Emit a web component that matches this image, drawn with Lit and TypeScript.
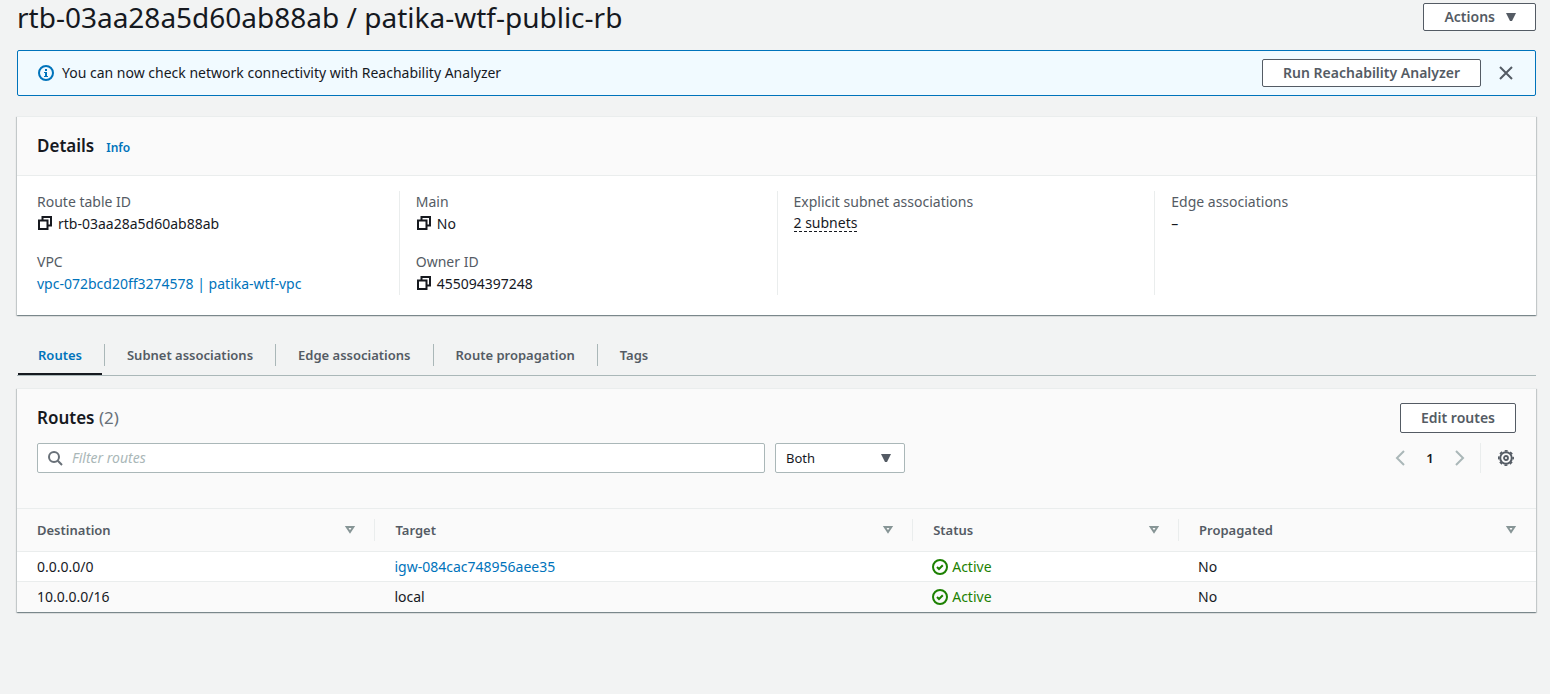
import { LitElement, html, css, svg } from "lit";
import { customElement, state } from "lit/decorators.js";

interface Route {
  destination: string;
  target: string;
  link: boolean;
  status: string;
  propagated: string;
}

const ROUTES: Route[] = [
  { destination: "0.0.0.0/0", target: "igw-084cac748956aee35", link: true, status: "Active", propagated: "No" },
  { destination: "10.0.0.0/16", target: "local", link: false, status: "Active", propagated: "No" },
];

const TABS = ["Routes", "Subnet associations", "Edge associations", "Route propagation", "Tags"];
const COLUMNS = ["Destination", "Target", "Status", "Propagated"];

const icon = (body: unknown, name = "") =>
  html`<svg class="icon ${name}" viewBox="0 0 16 16" width="16" height="16" aria-hidden="true">${body}</svg>`;

const copyIcon = () =>
  icon(svg`<path d="M2 5.5h8.5V14H2z" /><path d="M5.5 5.5V2H14v8.5h-3.5" />`, "copy");
const infoIcon = () =>
  icon(
    svg`<circle cx="8" cy="8" r="7" /><path class="solid" d="M7 4h2v2H7zM6 7h3v4h1v1H6v-1h1V8H6z" />`,
    "info",
  );
const closeIcon = () => icon(svg`<path d="M2 2l12 12M14 2L2 14" />`, "grey");
const caret = () => icon(svg`<path class="solid" d="M3 4h10l-4 8H7z" />`, "grey");
const sortIcon = () => icon(svg`<path d="M4.7 5h6.6L8 10z" />`, "sort");
const searchIcon = () => icon(svg`<circle cx="7" cy="7" r="5" /><path d="M10.8 10.8L15 15" />`, "search-icon");
const checkIcon = () => icon(svg`<circle cx="8" cy="8" r="7" /><path d="M5 8l2 2 3.8-3.8" />`, "green");
const prevIcon = () => icon(svg`<path d="M12 1L5 8l7 7" />`, "pale");
const nextIcon = () => icon(svg`<path d="M4 1l7 7-7 7" />`, "pale");
const gearIcon = () =>
  icon(
    svg`<circle cx="8" cy="8" r="5.8" /><circle cx="8" cy="8" r="7.2" stroke-width="1.6" stroke-dasharray="3 2.65" stroke-dashoffset="1.5" /><circle cx="8" cy="8" r="2" stroke-width="1.8" />`,
    "grey",
  );

@customElement("app-root")
export class AppRoot extends LitElement {
  @state() private tab = 0;
  @state() private alertOpen = true;
  @state() private query = "";

  static styles = css`
    :host {
      display: block;
      box-sizing: border-box;
      min-height: 100vh;
      padding: 3px 14px 20px 17px;
      background: #f2f3f3;
      color: #16191f;
      font: 14px/22px "Noto Sans", "Open Sans", sans-serif;
    }
    * { box-sizing: border-box; }
    h1, h2, dl, dd, dt, ul, p { margin: 0; padding: 0; }
    button, input, select { font: inherit; color: inherit; }
    a { color: #0073bb; text-decoration: none; }
    .icon { display: block; flex: none; fill: none; stroke: currentColor; stroke-width: 2; }
    .solid { fill: currentColor; stroke: none; }
    .copy { margin-bottom: 2px; color: #16191f; }
    .info { color: #0073bb; }
    .grey { color: #545b64; }
    .search-icon { color: #687078; }
    .sort { color: #879596; }
    .pale { color: #aab7b8; }
    .green { color: #1d8102; }

    .top { display: flex; justify-content: space-between; align-items: center; gap: 20px; }
    h1 { font-size: 28px; line-height: 28px; font-weight: 400; }
    .btn {
      display: flex;
      align-items: center;
      gap: 8px;
      height: 28px;
      padding: 0 20px;
      border: 1px solid #545b64;
      border-radius: 2px;
      background: #fff;
      color: #545b64;
      font-weight: 600;
      white-space: nowrap;
      cursor: pointer;
    }
    .btn.menu { padding-right: 16px; }
    .btn.tall { height: 30px; }
    .plain { display: flex; justify-content: center; padding: 0; border: 0; background: none; cursor: pointer; }

    .alert {
      display: flex;
      align-items: center;
      gap: 8px;
      margin-top: 19px;
      padding: 8px 21px 8px 20px;
      border: 1px solid #0073bb;
      border-radius: 2px;
      background: #f1faff;
    }
    .alert p { flex: 1; }
    .alert .btn { margin-right: 9px; }

    .card {
      border-top: 1px solid #eaeded;
      background: #fff;
      box-shadow: 0 1px 1px 0 rgba(0, 28, 36, 0.3), 1px 1px 1px 0 rgba(0, 28, 36, 0.15),
        -1px 1px 1px 0 rgba(0, 28, 36, 0.15);
    }
    .details { margin-top: 20px; }
    .details header {
      display: flex;
      align-items: baseline;
      gap: 12px;
      padding: 18px 20px;
      border-bottom: 1px solid #eaeded;
      background: #fafafa;
    }
    h2 { font-size: 17px; line-height: 22px; font-weight: 600; }
    h2 span { color: #687078; font-weight: 400; }
    .info-link { font-size: 12px; line-height: 16px; font-weight: 600; }
    .facts { display: grid; grid-template-columns: repeat(4, 1fr); padding: 15px 4px 20px; }
    .facts dl { padding: 0 16px; }
    .facts dl + dl { border-left: 1px solid #eaeded; }
    dt { color: #545b64; }
    dd { display: flex; align-items: center; gap: 5px; }
    dd + dt { margin-top: 16px; }
    .dashed {
      padding: 2px 0 0;
      border: 0;
      border-bottom: 1px dashed #16191f;
      background: none;
      line-height: 16px;
      cursor: pointer;
    }

    .tabs {
      display: flex;
      margin-top: 29px;
      padding-left: 1px;
      border-bottom: 1px solid #aab7b8;
    }
    .tab {
      padding: 0 20px 7px;
      border: 0;
      border-bottom: 2px solid transparent;
      background: none;
      color: #545b64;
      font-size: 13px;
      font-weight: 600;
      cursor: pointer;
    }
    .tab.on { border-bottom-color: #16191f; color: #0073bb; }
    .rule { width: 1px; height: 22px; margin: 0 2px; background: #aab7b8; }

    .routes { margin-top: 12px; }
    .routes header { padding: 14px 20px 35px; background: #fafafa; }
    .line { display: flex; align-items: center; justify-content: space-between; }
    .tools { display: flex; align-items: center; gap: 10px; margin-top: 10px; }
    .search {
      display: flex;
      align-items: center;
      flex: 0 1 728px;
      gap: 9px;
      height: 30px;
      padding: 0 9px;
      border: 1px solid #aab7b8;
      border-radius: 2px;
      background: #fff;
    }
    .search input { flex: 1; min-width: 0; padding: 0; border: 0; outline: 0; background: none; }
    .search input::placeholder { color: #aab7b8; font-style: italic; opacity: 1; }
    .pick { display: grid; align-items: center; width: 130px; }
    .pick > * { grid-area: 1 / 1; }
    .pick .icon { justify-self: end; margin-right: 11px; pointer-events: none; }
    .pick select {
      appearance: none;
      width: 100%;
      height: 30px;
      padding: 0 30px 0 10px;
      border: 1px solid #aab7b8;
      border-radius: 2px;
      background: #fff;
      font-size: 13px;
    }
    .pager { display: flex; align-items: center; margin-left: auto; }
    .pager .plain { width: 20px; }
    .page { width: 40px; border: 0; padding: 0; background: none; text-align: center; font-size: 13px; font-weight: 600; }
    .prefs { display: flex; align-items: center; height: 30px; padding-left: 15px; border-left: 1px solid #eaeded; }
    .prefs .plain { width: 20px; }

    table { width: 100%; table-layout: fixed; border-collapse: separate; border-spacing: 0; }
    .c1 { width: 23.6%; }
    .c2 { width: 35.4%; }
    .c3 { width: 17.5%; }
    th {
      padding: 10px 0;
      border-top: 1px solid #eaeded;
      border-bottom: 1px solid #eaeded;
      background: #fafafa;
      color: #545b64;
      font-size: 13px;
      font-weight: 600;
      text-align: left;
    }
    .head { display: flex; align-items: center; justify-content: space-between; padding: 0 16px 0 20px; border-right: 1px solid #eaeded; }
    th:last-child .head { border-right-color: transparent; }
    td { height: 30px; padding: 0 19px; border-bottom: 1px solid #eaeded; }
    td:first-child { padding-left: 20px; }
    tr:last-child td { border-bottom: 0; background: #fafafa; }
    .status { display: flex; align-items: center; gap: 4px; color: #1d8102; }
  `;

  render() {
    const rows = ROUTES.filter((r) => (r.destination + r.target).includes(this.query));
    return html`
      <main>
        <div class="top">
          <h1>rtb-03aa28a5d60ab88ab / patika-wtf-public-rb</h1>
          <button class="btn menu">Actions ${caret()}</button>
        </div>

        ${this.alertOpen
          ? html`<div class="alert" role="status">
              ${infoIcon()}
              <p>You can now check network connectivity with Reachability Analyzer</p>
              <button class="btn">Run Reachability Analyzer</button>
              <button class="plain" aria-label="Dismiss" @click=${() => (this.alertOpen = false)}>${closeIcon()}</button>
            </div>`
          : ""}

        <section class="card details">
          <header>
            <h2>Details</h2>
            <a class="info-link" href="#info">Info</a>
          </header>
          <div class="facts">
            <dl>
              <dt>Route table ID</dt>
              <dd>${copyIcon()}rtb-03aa28a5d60ab88ab</dd>
              <dt>VPC</dt>
              <dd><a href="#vpc">vpc-072bcd20ff3274578 | patika-wtf-vpc</a></dd>
            </dl>
            <dl>
              <dt>Main</dt>
              <dd>${copyIcon()}No</dd>
              <dt>Owner ID</dt>
              <dd>${copyIcon()}455094397248</dd>
            </dl>
            <dl>
              <dt>Explicit subnet associations</dt>
              <dd><button class="dashed">2 subnets</button></dd>
            </dl>
            <dl>
              <dt>Edge associations</dt>
              <dd>–</dd>
            </dl>
          </div>
        </section>

        <div class="tabs" role="tablist">
          ${TABS.map(
            (t, i) => html`${i ? html`<span class="rule"></span>` : ""}<button
                class="tab ${i === this.tab ? "on" : ""}"
                role="tab"
                aria-selected=${i === this.tab ? "true" : "false"}
                @click=${() => (this.tab = i)}
              >${t}</button>`,
          )}
        </div>

        <section class="card routes">
          <header>
            <div class="line">
              <h2>Routes <span>(${ROUTES.length})</span></h2>
              <button class="btn tall">Edit routes</button>
            </div>
            <div class="tools">
              <label class="search">
                ${searchIcon()}
                <input
                  type="text"
                  aria-label="Filter routes"
                  placeholder="Filter routes"
                  @input=${(e: InputEvent) => (this.query = (e.target as HTMLInputElement).value)}
                />
              </label>
              <label class="pick">
                <select aria-label="Route type">
                  <option>Both</option>
                </select>
                ${caret()}
              </label>
              <nav class="pager" aria-label="Pages">
                <button class="plain" aria-label="Previous page">${prevIcon()}</button>
                <button class="page">1</button>
                <button class="plain" aria-label="Next page">${nextIcon()}</button>
              </nav>
              <div class="prefs">
                <button class="plain" aria-label="Preferences">${gearIcon()}</button>
              </div>
            </div>
          </header>
          <table>
            <colgroup>
              <col class="c1" />
              <col class="c2" />
              <col class="c3" />
              <col />
            </colgroup>
            <thead>
              <tr>
                ${COLUMNS.map((c) => html`<th scope="col"><div class="head">${c}${sortIcon()}</div></th>`)}
              </tr>
            </thead>
            <tbody>
              ${rows.map(
                (r) => html`<tr>
                  <td>${r.destination}</td>
                  <td>${r.link ? html`<a href="#gateway">${r.target}</a>` : r.target}</td>
                  <td><div class="status">${checkIcon()}${r.status}</div></td>
                  <td>${r.propagated}</td>
                </tr>`,
              )}
            </tbody>
          </table>
        </section>
      </main>
    `;
  }
}
